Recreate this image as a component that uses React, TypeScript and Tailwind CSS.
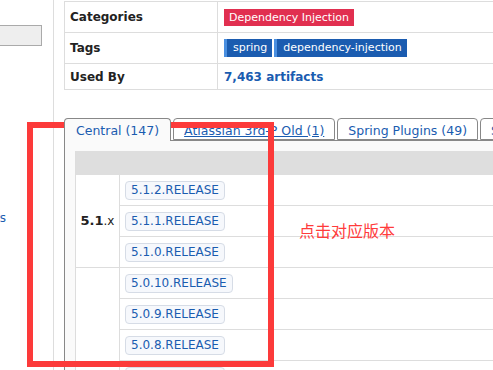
import React from 'react'

const versions51 = ['5.1.2.RELEASE', '5.1.1.RELEASE', '5.1.0.RELEASE']
const versions50 = ['5.0.10.RELEASE', '5.0.9.RELEASE', '5.0.8.RELEASE', '5.0.7.RELEASE']

function VersionRow({ v }: { v: string }) {
  return (
    <div className="h-[31px] border-b border-[#ddd] bg-white pl-[5px] flex items-center">
      <a className="h-[19px] px-[5px] border border-[#d6dce6] rounded-[4px] bg-[#f6f8fc] text-[12px] leading-[17px] text-[#1a5cb0]">
        {v}
      </a>
    </div>
  )
}

function Group({ label, items }: { label?: boolean; items: string[] }) {
  return (
    <div className="flex">
      <div className="w-[44px] shrink-0 border-r border-b border-[#ddd] bg-white flex items-center justify-center text-[12px] text-[#222]">
        {label && (
          <span>
            <b className="text-[13px]">5.1</b>.x
          </span>
        )}
      </div>
      <div className="flex-1 flex flex-col">
        {items.map((v) => (
          <VersionRow key={v} v={v} />
        ))}
      </div>
    </div>
  )
}

export default function App() {
  return (
    <div className="relative w-[493px] h-[370px] overflow-hidden bg-white flex font-['DejaVu_Sans',sans-serif]">
      {/* sidebar */}
      <div className="w-[54px] shrink-0 border-r border-[#ddd] flex flex-col">
        <div className="mt-[25px] w-[42px] h-[21px] bg-[#eee] border border-l-0 border-[#aaa]" />
        <span className="mt-[163px] -ml-[5px] text-[12px] text-[#1a5cb0]">ts</span>
      </div>

      {/* main */}
      <div className="flex-1 pl-[10px] overflow-hidden">
        <div className="w-[600px] mt-[1px] border-t border-l border-[#ddd]">
          <div className="flex border-b border-[#ddd] h-[31px]">
            <div className="w-[153px] shrink-0 border-r border-[#ddd] pl-[5px] flex items-center text-[12px] font-bold text-[#222]">
              Categories
            </div>
            <div className="pl-[6px] flex items-center">
              <span className="h-[17px] px-[5px] bg-[#e12f50] text-white text-[11px] leading-[17px]">
                Dependency Injection
              </span>
            </div>
          </div>
          <div className="flex border-b border-[#ddd] h-[31px]">
            <div className="w-[153px] shrink-0 border-r border-[#ddd] pl-[5px] flex items-center text-[12px] font-bold text-[#222]">
              Tags
            </div>
            <div className="pl-[6px] flex items-center gap-[2px]">
              <span className="h-[18px] border-l-[3px] border-[#4a8fe0] pl-[6px] pr-[5px] bg-[#1b5cb0] text-white text-[11px] leading-[18px]">
                spring
              </span>
              <span className="h-[18px] border-l-[3px] border-[#4a8fe0] pl-[6px] pr-[5px] bg-[#1b5cb0] text-white text-[11px] leading-[18px]">
                dependency-injection
              </span>
            </div>
          </div>
          <div className="flex border-b border-[#ddd] h-[26px]">
            <div className="w-[153px] shrink-0 border-r border-[#ddd] pl-[5px] flex items-center text-[12px] font-bold text-[#222]">
              Used By
            </div>
            <div className="pl-[6px] flex items-center">
              <a className="text-[12px] font-bold text-[#1a5cb0]">7,463 artifacts</a>
            </div>
          </div>
        </div>

        {/* tabs */}
        <div className="mt-[28px] w-[600px] flex items-end gap-[2px]">
          <div className="relative z-10 -mb-px h-[23px] border border-b-0 border-[#888] rounded-t-[4px] bg-[#fafafa] px-[11px] pt-[5px] text-[12.5px] leading-[14px] text-[#1a5cb0]">
            Central (147)
          </div>
          <div className="h-[22px] border border-[#888] rounded-t-[4px] bg-white px-[10px] pt-[5px] text-[12.5px] leading-[14px] text-[#1a5cb0] underline">
            Atlassian 3rd-P Old (1)
          </div>
          <div className="h-[22px] border border-[#888] rounded-t-[4px] bg-white px-[10px] pt-[5px] text-[12.5px] leading-[14px] text-[#1a5cb0]">
            Spring Plugins (49)
          </div>
          <div className="h-[22px] border border-[#888] rounded-t-[4px] bg-white px-[10px] pt-[5px] text-[12.5px] leading-[14px] text-[#1a5cb0]">
            Spring Lib M (2)
          </div>
        </div>
        <div className="w-[600px] border-t border-l border-[#888] bg-[#fafafa] pl-[10px] pt-[10px]">
          <div className="border-l border-[#ddd]">
            <div className="h-[24px] bg-[#dedede]" />
            <Group label items={versions51} />
            <Group items={versions50} />
          </div>
        </div>
      </div>

      {/* annotation */}
      <div className="absolute left-[27px] top-[122px] w-[247px] h-[245px] border-[6px] border-[#fc3a3a]" />
      <div className="absolute left-[299px] top-[220px] text-[16px] leading-[20px] text-[#ff3b3b] font-['Noto_Sans_CJK_SC',sans-serif]">
        点击对应版本
      </div>
    </div>
  )
}
